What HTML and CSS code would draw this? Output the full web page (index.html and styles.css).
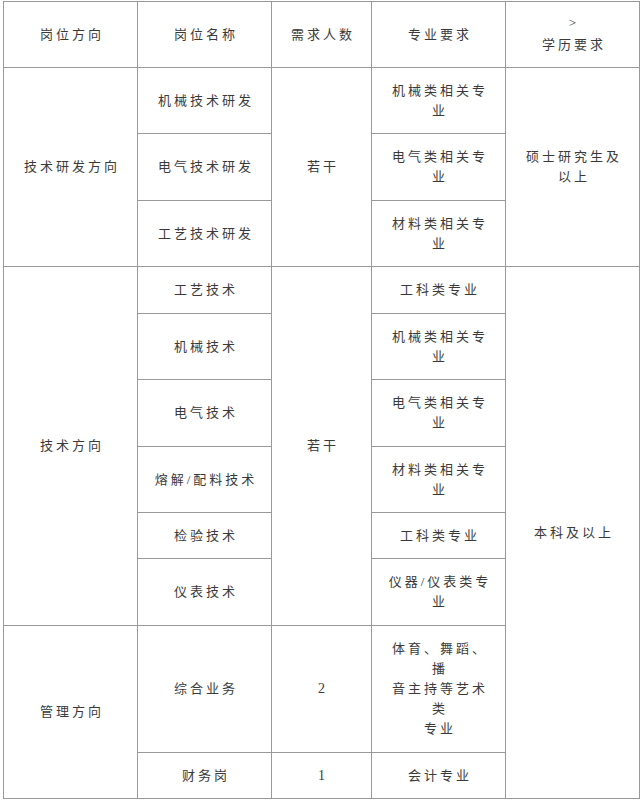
FILE: index.html
```html
<!DOCTYPE html>
<html lang="zh-CN">
<head>
<meta charset="utf-8">
<title>岗位需求表</title>
<link rel="stylesheet" href="styles.css">
</head>
<body>
<div class="grid">
  <div class="cell">岗位方向</div>
  <div class="cell">岗位名称</div>
  <div class="cell">需求人数</div>
  <div class="cell">专业要求</div>
  <div class="cell"><span class="gt">&gt;</span>学历要求</div>

  <div class="cell span3">技术研发方向</div>
  <div class="cell">机械技术研发</div>
  <div class="cell span3">若干</div>
  <div class="cell">机械类相关专<br>业</div>
  <div class="cell span3">硕士研究生及<br>以上</div>

  <div class="cell">电气技术研发</div>
  <div class="cell">电气类相关专<br>业</div>

  <div class="cell">工艺技术研发</div>
  <div class="cell">材料类相关专<br>业</div>

  <div class="cell span6">技术方向</div>
  <div class="cell">工艺技术</div>
  <div class="cell span6">若干</div>
  <div class="cell">工科类专业</div>
  <div class="cell span8">本科及以上</div>

  <div class="cell">机械技术</div>
  <div class="cell">机械类相关专<br>业</div>

  <div class="cell">电气技术</div>
  <div class="cell">电气类相关专<br>业</div>

  <div class="cell">熔解/配料技术</div>
  <div class="cell">材料类相关专<br>业</div>

  <div class="cell">检验技术</div>
  <div class="cell">工科类专业</div>

  <div class="cell">仪表技术</div>
  <div class="cell">仪器/仪表类专<br>业</div>

  <div class="cell span2">管理方向</div>
  <div class="cell">综合业务</div>
  <div class="cell num">2</div>
  <div class="cell">体育、舞蹈、<br>播<br>音主持等艺术<br>类<br>专业</div>

  <div class="cell">财务岗</div>
  <div class="cell num">1</div>
  <div class="cell">会计专业</div>
</div>
</body>
</html>
```

FILE: styles.css
```css
html, body {
  margin: 0;
  padding: 0;
  background: #ffffff;
}

.grid {
  margin: 1px 0 0 3px;
  width: 635px;
  padding: 1px;
  background: #9a9a9a;
  display: grid;
  grid-template-columns: 133px 133px 99px 133px 133px;
  grid-template-rows: 65px 65px 66px 65px 46px 65px 66px 65px 45px 66px 126px 45px;
  gap: 1px;
}

.cell {
  background: #ffffff;
  display: flex;
  flex-direction: column;
  align-items: center;
  justify-content: center;
  text-align: center;
  font-family: "Liberation Serif", "Noto Sans CJK SC", sans-serif;
  font-size: 13px;
  line-height: 20px;
  letter-spacing: 3px;
  padding-left: 3px;
  color: #3a3a3a;
}

.gt {
  display: block;
  line-height: 16px;
  margin-bottom: 4px;
  font-size: 13px;
}

.num {
  font-size: 14px;
  letter-spacing: 0;
  padding-left: 0;
}

.span2 { grid-row: span 2; }
.span3 { grid-row: span 3; }
.span6 { grid-row: span 6; }
.span8 { grid-row: span 8; }
```
